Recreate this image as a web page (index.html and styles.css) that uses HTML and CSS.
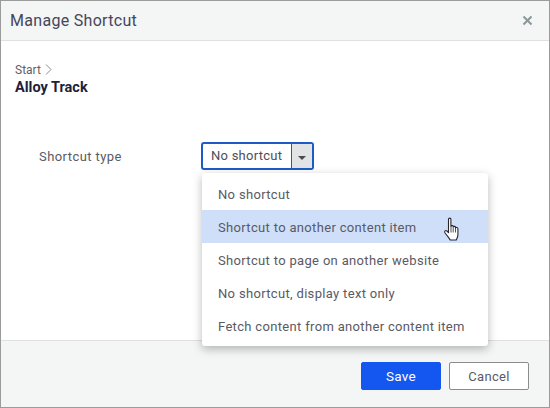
FILE: index.html
```html
<!DOCTYPE html>
<html lang="en">
<head>
    <meta charset="UTF-8">
    <title>Manage Shortcut</title>
    <link rel="stylesheet" href="styles.css">
</head>
<body>
    <section class="dialog">
        <header class="dialog-header">
            <h1>Manage Shortcut</h1>
            <svg class="close" width="11" height="11" viewBox="0 0 11 11" aria-label="Close">
                <path d="M1.5 1.5l8 8M9.5 1.5l-8 8" fill="none" stroke="#8b9698" stroke-width="2"/>
            </svg>
        </header>

        <main class="dialog-body">
            <div class="crumb">
                <span>Start</span>
                <svg width="7" height="11" viewBox="0 0 7 11">
                    <path d="M1 .5l5 5-5 5" fill="none" stroke="#8a8a90" stroke-width="1"/>
                </svg>
            </div>
            <h2>Alloy Track</h2>

            <div class="field">
                <label>Shortcut type</label>
                <div class="select">
                    <span class="select-value">No shortcut</span>
                    <span class="select-arrow"></span>
                </div>
            </div>

            <ul class="menu">
                <li>No shortcut</li>
                <li class="active">Shortcut to another content item</li>
                <li>Shortcut to page on another website</li>
                <li>No shortcut, display text only</li>
                <li>Fetch content from another content item</li>
            </ul>

            <svg class="cursor" width="18" height="26" viewBox="0 0 18 26">
                <path d="M5.5 2.2c0-1.500 2.400-1.500 2.400 0v7.300c0-1.200 2.300-1.200 2.300 0v.8c0-1.200 2.300-1.200 2.300 0v1c0-1.200 2.400-1.200 2.400 .2v6.200c0 2.600-1 3.600-1.700 5.300H7.200c-.9-2-2.700-3.500-5.300-7.300-.9-1.400.7-2.900 2-1.700l1.600 1.700z" fill="#fff" stroke="#26262c" stroke-width="1.100" stroke-linejoin="round"/>
                <path d="M8 10v5.500M10.200 11v4.500M12.500 11.500v4" fill="none" stroke="#26262c" stroke-width=".8"/>
            </svg>
        </main>

        <footer class="dialog-footer">
            <button class="btn btn-primary">Save</button>
            <button class="btn">Cancel</button>
        </footer>
    </section>
</body>
</html>
```

FILE: styles.css
```css
html{
    box-sizing: border-box;
    font-family: "Roboto", "Liberation Sans", sans-serif;
    font-size: 13px;
}

*, *::after, *::before{
    box-sizing: inherit;
}

body{
    margin: 0;
    height: 408px;
    background-color: #fff;
    overflow: hidden;
}

.dialog{
    display: flex;
    flex-direction: column;
    height: 408px;
    border: 1px solid #9b9b9b;
}

.dialog-header{
    display: flex;
    justify-content: space-between;
    align-items: center;
    height: 40px;
    padding: 0 16px 0 9px;
    background-color: #f4f5f5;
    border-bottom: 1px solid #dfe0e0;
}

.dialog-header h1{
    margin: 0;
    font-size: 16px;
    font-weight: 400;
    color: #46465a;
    letter-spacing: .3px;
}

.close{
    margin-top: -1px;
}

.dialog-body{
    position: relative;
    flex-grow: 1;
    padding: 22px 14px 0;
}

.crumb{
    display: flex;
    align-items: center;
    gap: 4px;
    height: 13px;
    font-size: 12px;
    color: #5f5f68;
}

.dialog-body h2{
    margin: 2px 0 0;
    font-size: 14.5px;
    line-height: 20px;
    font-weight: 700;
    color: #1e1e3c;
}

.field{
    display: flex;
    align-items: center;
    margin: 44px 0 0 24px;
}

.field label{
    width: 162px;
    font-size: 13px;
    color: #5a5a64;
    letter-spacing: .43px;
}

.select{
    display: flex;
    width: 113px;
    height: 28px;
    border: 2px solid #1e5bc6;
    border-radius: 3px;
}

.select-value{
    width: 89px;
    padding-left: 8px;
    line-height: 24px;
    color: #4e4e58;
    letter-spacing: .25px;
    border-right: 1px solid #1e5bc6;
}

.select-arrow{
    display: flex;
    flex-grow: 1;
    justify-content: center;
    align-items: center;
    background-color: #e2e3e4;
}

.select-arrow::after{
    content: "";
    margin-top: 3px;
    border-top: 4px solid #4a4a50;
    border-left: 4px solid transparent;
    border-right: 4px solid transparent;
}

.menu{
    position: absolute;
    top: 132px;
    left: 201px;
    width: 286px;
    margin: 0;
    padding: 4px 0;
    list-style: none;
    background-color: #fff;
    border-radius: 3px;
    box-shadow: 0 3px 10px rgba(0, 0, 0, .28);
}

.menu li{
    height: 33px;
    padding-left: 16px;
    line-height: 35px;
    color: #5a5a64;
    letter-spacing: .33px;
}

.menu .active{
    background-color: #cfdffa;
}

.cursor{
    position: absolute;
    top: 176px;
    left: 442px;
}

.dialog-footer{
    display: flex;
    justify-content: flex-end;
    gap: 8px;
    height: 67px;
    padding: 21px 20px 0 0;
    background-color: #f4f5f5;
    border-top: 1px solid #dfe0e0;
}

.btn{
    width: 80px;
    height: 28px;
    padding: 0;
    font-family: inherit;
    font-size: 13px;
    color: #5a5a64;
    letter-spacing: .3px;
    background-color: #fff;
    border: 1px solid #8c8c8c;
    border-radius: 2px;
}

.btn-primary{
    color: #fff;
    font-size: 13.5px;
    background-color: #1457f0;
    border-color: #1457f0;
}
```
